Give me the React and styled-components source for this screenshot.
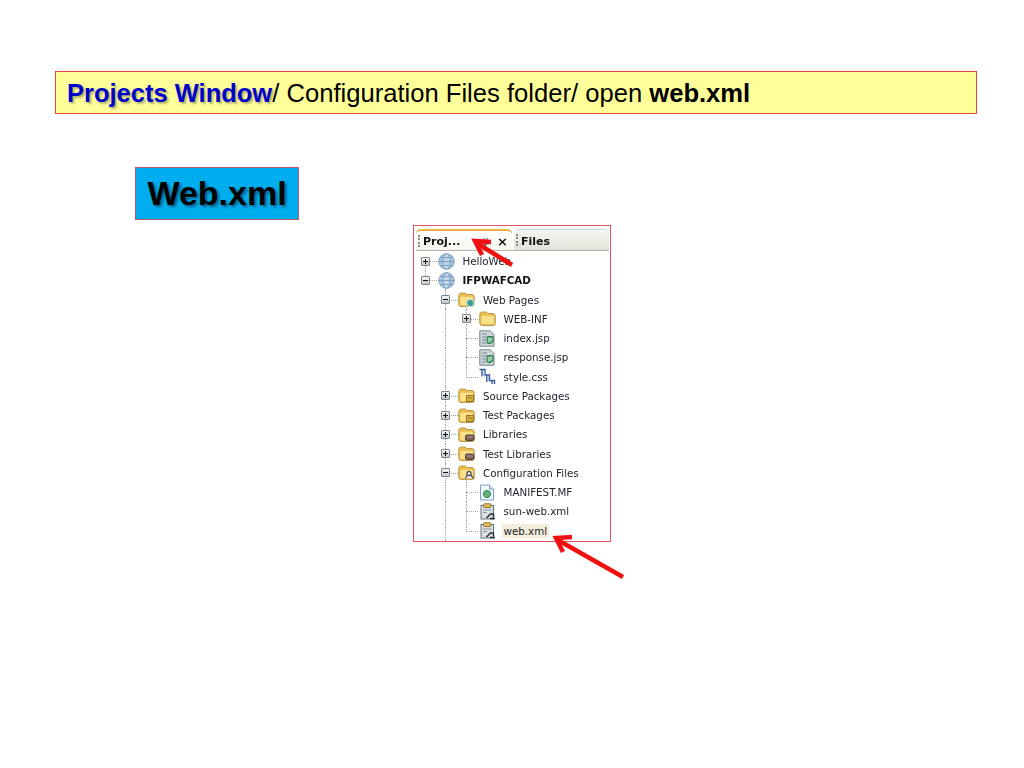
import React from "react";
import styled, { createGlobalStyle } from "styled-components";

const GlobalStyle = createGlobalStyle`
  html, body {
    margin: 0;
    padding: 0;
    background: #fff;
  }
`;

const Page = styled.div`
  width: 1024px;
  height: 768px;
  box-sizing: border-box;
  padding: 71px 47px 0 55px;
  overflow: hidden;
  font-family: "Liberation Sans", Arial, sans-serif;
`;

const TitleBar = styled.div`
  height: 43px;
  box-sizing: border-box;
  padding: 2px 0 0 11px;
  display: flex;
  align-items: center;
  background: #ffff99;
  border: 1px solid #e0483a;
  font-size: 25.6px;
  color: #000;
  white-space: pre;
`;

const Highlight = styled.span`
  font-size: 25.5px;
  font-weight: 700;
  color: #0000cc;
  text-shadow: 2px 2px 2px rgba(110, 110, 70, 0.5);
`;

const Strong = styled.span`
  font-weight: 700;
`;

const Badge = styled.div`
  width: 164px;
  height: 53px;
  box-sizing: border-box;
  margin: 53px 0 0 80px;
  display: flex;
  align-items: center;
  justify-content: center;
  background: #00aeef;
  border: 1px solid #c0566e;
  font-size: 34px;
  font-weight: 700;
  color: #000;
  text-shadow: 2px 2px 3px rgba(0, 40, 70, 0.6);
`;

const PanelWrap = styled.div`
  position: relative;
  width: 198px;
  margin: 5px 0 0 358px;
`;

const Panel = styled.div`
  width: 198px;
  height: 317px;
  box-sizing: border-box;
  padding: 3px 1px 0 2px;
  border: 1px solid #e2555c;
  overflow: hidden;
  font-family: "DejaVu Sans", Verdana, sans-serif;
  filter: blur(0.4px);
`;

const Tabs = styled.div`
  display: flex;
  height: 21px;
  border-bottom: 1px solid #b5b5ae;
  gap: 2px;
`;

const Tab = styled.div`
  position: relative;
  width: ${(p) => (p.$active ? "96px" : "95px")};
  box-sizing: border-box;
  padding: 2px 0 0 7px;
  display: flex;
  align-items: center;
  font-size: 11px;
  font-weight: 700;
  color: #111;
  border-radius: 5px 5px 0 0;
  border-top: ${(p) => (p.$active ? "2px solid #f0b040" : "1px solid #d8d8d2")};
  background: ${(p) =>
    p.$active
      ? "linear-gradient(#fff, #f6f5ee)"
      : "linear-gradient(#f6f6f2, #e2e1da)"};
  &::before {
    content: "";
    position: absolute;
    left: 2px;
    top: 4px;
    height: 12px;
    border-left: 2px dotted #8a8a80;
  }
`;

const TabTools = styled.div`
  margin-left: auto;
  display: flex;
  align-items: center;
  gap: 6px;
  padding-right: 4px;
  font-size: 13px;
`;

const Tree = styled.div`
  padding-top: 0.5px;
`;

const Row = styled.div`
  position: relative;
  height: 19.25px;
  display: flex;
  align-items: center;
  padding-left: ${(p) => 4.5 + p.$level * 20.5}px;
  font-size: 10.3px;
  color: #23232f;
  white-space: nowrap;
`;

const Guide = styled.span`
  position: absolute;
  left: ${(p) => p.$x}px;
  top: ${(p) => p.$top ?? 0}px;
  bottom: ${(p) => p.$bottom ?? 0}px;
  border-left: 1px dotted #a4a4a4;
`;

const Stub = styled.span`
  position: absolute;
  left: ${(p) => p.$x}px;
  top: 50%;
  width: ${(p) => p.$w}px;
  border-top: 1px dotted #a4a4a4;
`;

const Expander = styled.span`
  position: relative;
  z-index: 1;
  width: 9px;
  height: 9px;
  flex: none;
  box-sizing: border-box;
  border: 1px solid #7d858c;
  border-radius: 1px;
  background: linear-gradient(#f4f4f4, #c4c8cc);
  margin-right: 8px;
  visibility: ${(p) => (p.$empty ? "hidden" : "visible")};
  &::before {
    content: "";
    position: absolute;
    left: 1px;
    top: 3px;
    width: 5px;
    height: 1px;
    background: #111;
  }
  &::after {
    content: "";
    display: ${(p) => (p.$open ? "none" : "block")};
    position: absolute;
    left: 3px;
    top: 1px;
    width: 1px;
    height: 5px;
    background: #111;
  }
`;

const IconSlot = styled.span`
  position: relative;
  z-index: 1;
  width: 17px;
  height: 17px;
  flex: none;
  margin-right: 8px;
  display: flex;
`;

const Label = styled.span`
  font-weight: ${(p) => (p.$bold ? 700 : 400)};
  color: ${(p) => (p.$bold ? "#111" : "inherit")};
  padding: 1px 2px;
  margin-left: -2px;
  background: ${(p) => (p.$selected ? "#f3eedb" : "transparent")};
`;

const Arrows = styled.svg`
  position: absolute;
  left: 0;
  top: 0;
  overflow: visible;
  pointer-events: none;
`;

function Globe() {
  return (
    <svg width="17" height="17" viewBox="0 0 17 17">
      <circle cx="8.5" cy="8.5" r="7.8" fill="#a9c6e0" stroke="#86a6c6" />
      <ellipse cx="8.5" cy="8.5" rx="3.6" ry="7.8" fill="#c2d7ea" stroke="#7f9fbf" />
      <path d="M.8 8.5h15.4M2 4.6h13M2 12.4h13" stroke="#7f9fbf" fill="none" />
    </svg>
  );
}

function Folder({ badge }) {
  return (
    <svg width="17" height="17" viewBox="0 0 17 17">
      <path
        d="M.8 4.5 Q.8 2 3 2 H7 Q8 2 8.8 3.5 H14 Q16.2 3.5 16.2 6 V13.5 Q16.2 15.5 14 15.5 H3 Q.8 15.5 .8 13.5 Z"
        fill="#e9bb50"
        stroke="#bd9a48"
      />
      <path d="M2.3 6.5 Q2.3 5.7 3.2 5.7 H14 Q15 5.7 15 6.6 V13 Q15 14.3 13.8 14.3 H3.4 Q2.3 14.3 2.3 13 Z" fill="#fbe08a" />
      {badge === "web" && <circle cx="12.3" cy="12" r="3.8" fill="#3f9f92" stroke="#dff0e8" />}
      {badge === "pkg" && (
        <g>
          <rect x="8.5" y="8.5" width="7" height="6" fill="#d9ad3e" stroke="#93742a" />
          <path d="M10 11h4" stroke="#93742a" />
        </g>
      )}
      {badge === "lib" && (
        <g>
          <rect x="7.5" y="9" width="8.5" height="5.5" rx="1.5" fill="#7d6358" stroke="#4f4038" />
          <path d="M9 11h5.5" stroke="#b59a8c" />
        </g>
      )}
      {badge === "cfg" && (
        <g fill="none" stroke="#50565c" strokeWidth="1.3">
          <path d="M7.5 14.5 L9.5 10.5 H12.5 L15.5 14.5" fill="#e6e8e8" />
          <circle cx="11" cy="9.5" r="2" fill="#fff" />
        </g>
      )}
    </svg>
  );
}

function JspFile() {
  return (
    <svg width="17" height="17" viewBox="0 0 17 17">
      <path d="M.8 .8 H11 L15 4.5 V16.2 H.8 Z" fill="#ced6da" stroke="#75868f" />
      <path d="M3 4h5M3 7h4M3 10h4M3 13h4" stroke="#76858e" />
      <path d="M8 6.5 H14 V12 Q11 15 8 13 Z" fill="#5fae7a" stroke="#3a7d55" />
      <path d="M10 8v4M12 8v3" stroke="#d8efe0" />
    </svg>
  );
}

function CssFile() {
  return (
    <svg width="17" height="17" viewBox="0 0 17 17">
      <path d="M.5 1.5 H6 V7 H10.5 V12.5 H15.5 V16" fill="none" stroke="#3d5f9f" strokeWidth="1.4" />
      <path d="M3 1.5 V8.5 M7.8 7 V14 M13 12.5 V16" fill="none" stroke="#3d5f9f" strokeWidth="1.4" />
      <path d="M4.7 3 V8 M9.3 8.5 V13.5" fill="none" stroke="#a9c4e0" strokeWidth="1.2" />
    </svg>
  );
}

function Manifest() {
  return (
    <svg width="17" height="17" viewBox="0 0 17 17">
      <path d="M1.5 1 H10.5 L14.5 5 V16 H1.5 Z" fill="#eef4fa" stroke="#7da0c8" />
      <path d="M10.5 1 V5 H14.5" fill="#cfe0f0" stroke="#7da0c8" />
      <circle cx="8" cy="10" r="3.6" fill="#5fb07a" stroke="#3f8a5c" />
    </svg>
  );
}

function XmlFile() {
  return (
    <svg width="17" height="17" viewBox="0 0 17 17">
      <rect x="2" y="2.5" width="12.5" height="13.5" fill="#d9dfe3" stroke="#64727e" />
      <rect x="4.5" y=".8" width="7.5" height="3.6" rx="1" fill="#e6c057" stroke="#857130" />
      <path d="M4 7h8.5M4 9.5h4" stroke="#8b98a3" />
      <path d="M7.5 15 L11.5 11 H14.5 V14 M11 15.5 H16" stroke="#232c38" strokeWidth="1.4" fill="none" />
    </svg>
  );
}

// guide lines are relative to the row, so every row lists the ones passing through it
const rows = [
  { level: 0, exp: "closed", icon: <Globe />, text: "HelloWeb", guides: [{ x: 9, top: 10 }] },
  { level: 0, exp: "open", icon: <Globe />, text: "IFPWAFCAD", bold: true, guides: [{ x: 9, bottom: 10 }, { x: 29, top: 14 }] },
  { level: 1, exp: "open", icon: <Folder badge="web" />, text: "Web Pages", guides: [{ x: 29 }, { x: 50, top: 14 }] },
  { level: 2, exp: "closed", icon: <Folder />, text: "WEB-INF", guides: [{ x: 29 }, { x: 50 }] },
  { level: 2, icon: <JspFile />, text: "index.jsp", guides: [{ x: 29 }, { x: 50 }], stub: true },
  { level: 2, icon: <JspFile />, text: "response.jsp", guides: [{ x: 29 }, { x: 50 }], stub: true },
  { level: 2, icon: <CssFile />, text: "style.css", guides: [{ x: 29 }, { x: 50, bottom: 10 }], stub: true },
  { level: 1, exp: "closed", icon: <Folder badge="pkg" />, text: "Source Packages", guides: [{ x: 29 }] },
  { level: 1, exp: "closed", icon: <Folder badge="pkg" />, text: "Test Packages", guides: [{ x: 29 }] },
  { level: 1, exp: "closed", icon: <Folder badge="lib" />, text: "Libraries", guides: [{ x: 29 }] },
  { level: 1, exp: "closed", icon: <Folder badge="lib" />, text: "Test Libraries", guides: [{ x: 29 }] },
  { level: 1, exp: "open", icon: <Folder badge="cfg" />, text: "Configuration Files", guides: [{ x: 29 }, { x: 50, top: 14 }] },
  { level: 2, icon: <Manifest />, text: "MANIFEST.MF", guides: [{ x: 29 }, { x: 50 }], stub: true },
  { level: 2, icon: <XmlFile />, text: "sun-web.xml", guides: [{ x: 29 }, { x: 50 }], stub: true },
  { level: 2, icon: <XmlFile />, text: "web.xml", selected: true, guides: [{ x: 29 }, { x: 50, bottom: 10 }], stub: true },
  { level: 2, text: "", guides: [{ x: 29 }] },
];

function App() {
  return (
    <>
      <GlobalStyle />
      <Page>
        <TitleBar>
          <Highlight>Projects Window</Highlight>/ Configuration Files folder/ open <Strong>web.xml</Strong>
        </TitleBar>
        <Badge>Web.xml</Badge>
        <PanelWrap>
          <Panel>
            <Tabs>
              <Tab $active>
                Proj...
                <TabTools>
                  <svg width="10" height="10" viewBox="0 0 10 10">
                    <path d="M3 1v6M6 1v6M1.5 7h6M4.5 7v3" stroke="#444" fill="none" />
                  </svg>
                  ×
                </TabTools>
              </Tab>
              <Tab>Files</Tab>
            </Tabs>
            <Tree>
              {rows.map((row, i) => (
                <Row key={i} $level={row.level}>
                  {row.guides.map((g, j) => (
                    <Guide key={j} $x={g.x} $top={g.top} $bottom={g.bottom} />
                  ))}
                  {row.stub && <Stub $x={50} $w={12} />}
                  {row.exp && (
                    <>
                      <Stub $x={9 + row.level * 20.5} $w={18} />
                      <Expander $open={row.exp === "open"} />
                    </>
                  )}
                  {!row.exp && row.icon && <Expander $empty />}
                  {row.icon && <IconSlot>{row.icon}</IconSlot>}
                  {row.text && (
                    <Label $bold={row.bold} $selected={row.selected}>
                      {row.text}
                    </Label>
                  )}
                </Row>
              ))}
            </Tree>
          </Panel>
          <Arrows width="198" height="317" viewBox="413 225 198 317">
            <g fill="none" stroke="#f01010" strokeWidth="4.5">
              <path d="M475 242 L512 265" />
              <path d="M491 242 L475 241 L482 255" />
              <path d="M556 539 L623 577" />
              <path d="M572 537 L556 538 L563 552" />
            </g>
          </Arrows>
        </PanelWrap>
      </Page>
    </>
  );
}

export default App;
